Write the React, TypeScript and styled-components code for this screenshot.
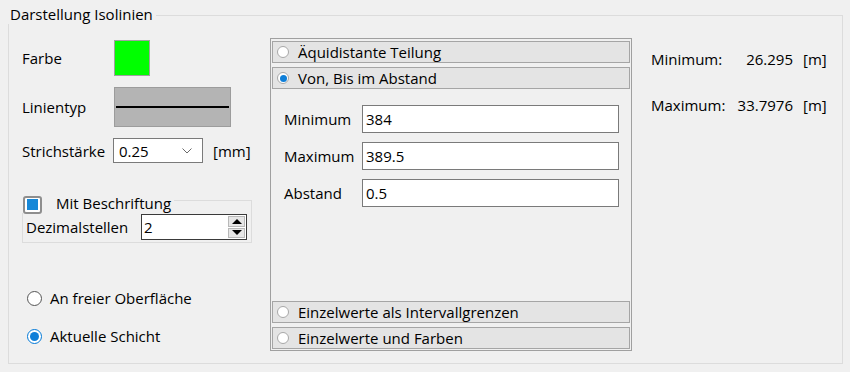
import React from "react";
import styled, { createGlobalStyle } from "styled-components";

const GlobalStyle = createGlobalStyle`
  html, body {
    margin: 0;
    padding: 0;
    background: #f0f0f0;
  }
  body {
    font-family: "Open Sans", "Noto Sans", sans-serif;
    font-size: 15px;
    color: #000;
  }
`;

const Page = styled.div`
  width: 850px;
  height: 372px;
  box-sizing: border-box;
  padding: 15px 0 0 8px;
  background: #f0f0f0;
`;

const GroupBox = styled.div`
  position: relative;
  width: 835px;
  height: 349px;
  box-sizing: border-box;
  border: 1px solid #dcdcdc;
`;

const Caption = styled.div`
  position: absolute;
  top: -12px;
  left: -1px;
  height: 20px;
  line-height: 20px;
  padding: 0 3px 0 2px;
  background: #f0f0f0;
  white-space: nowrap;
`;

const Columns = styled.div`
  display: grid;
  grid-template-columns: 230px 362px 1fr;
  column-gap: 18px;
  align-items: start;
  padding: 22px 0 0 13px;
`;

const LeftColumn = styled.div`
  display: flex;
  flex-direction: column;
  padding-top: 2px;
`;

const FieldRow = styled.div<{ $height: number; $gap?: number }>`
  display: grid;
  grid-template-columns: 92px auto 1fr;
  align-items: center;
  height: ${(p) => p.$height}px;
  margin-bottom: ${(p) => p.$gap ?? 11}px;
`;

const Label = styled.span`
  line-height: 20px;
  white-space: nowrap;
`;

const ColorSwatch = styled.div<{ $color: string }>`
  width: 36px;
  height: 36px;
  box-sizing: border-box;
  border: 1px solid #a0a0a0;
  background: ${(p) => p.$color};
`;

const LineStyleBox = styled.div`
  width: 117px;
  height: 40px;
  box-sizing: border-box;
  border: 1px solid #9c9c9c;
  background: #b4b4b4;
  display: flex;
  align-items: center;
  padding: 0 1px;
`;

const LineSample = styled.div`
  flex: 1;
  height: 2px;
  background: #000;
`;

const ComboBox = styled.div`
  display: flex;
  align-items: center;
  justify-content: space-between;
  width: 90px;
  height: 25px;
  margin-left: -1px;
  box-sizing: border-box;
  border: 1px solid #7a7a7a;
  background: #fff;
  padding: 0 10px 0 5px;
`;

const Unit = styled.span`
  margin-left: 10px;
  line-height: 20px;
`;

const SubGroup = styled.div`
  position: relative;
  margin-top: 37px;
  height: 43px;
  box-sizing: border-box;
  border: 1px solid #dcdcdc;
  padding: 13px 4px 0 3px;
`;

const SubCaption = styled.label`
  position: absolute;
  top: -8px;
  left: -1px;
  height: 20px;
  display: flex;
  align-items: center;
  gap: 14px;
  padding: 0 3px 0 1px;
  background: #f0f0f0;
  line-height: 20px;
`;

const CheckBox = styled.span<{ $checked: boolean }>`
  width: 19px;
  height: 18px;
  box-sizing: border-box;
  border: 2px solid #8e8e8e;
  border-radius: 3px;
  background: #fff;
  display: flex;
  align-items: center;
  justify-content: center;
  margin-top: 3px;

  &::after {
    content: "";
    width: 11px;
    height: 11px;
    background: ${(p) => (p.$checked ? "#1688d8" : "transparent")};
  }
`;

const SpinRow = styled.div`
  display: grid;
  grid-template-columns: 115px 1fr;
  align-items: center;
`;

const SpinBox = styled.div`
  display: flex;
  height: 26px;
  box-sizing: border-box;
  border: 1px solid #3a3a3a;
  background: #fff;
`;

const SpinValue = styled.span`
  flex: 1;
  padding-left: 2px;
  line-height: 24px;
`;

const SpinButtons = styled.div`
  display: flex;
  flex-direction: column;
  width: 17px;
  padding: 1px;
  gap: 1px;
`;

const SpinButton = styled.div<{ $up: boolean }>`
  flex: 1;
  background: #e6e6e6;
  border: 1px solid #b8b8b8;
  display: flex;
  align-items: center;
  justify-content: center;

  &::after {
    content: "";
    border-left: 5px solid transparent;
    border-right: 5px solid transparent;
    ${(p) => (p.$up ? "border-bottom" : "border-top")}: 5px solid #000;
  }
`;

const RadioList = styled.div`
  display: flex;
  flex-direction: column;
  gap: 18px;
  margin-top: 45px;
  padding-left: 5px;
`;

const RadioOption = styled.label`
  display: flex;
  align-items: center;
  gap: 8px;
  height: 20px;
  line-height: 20px;
`;

const RadioDot = styled.span<{ $checked: boolean; $size: number; $ring: string }>`
  position: relative;
  flex: none;
  width: ${(p) => p.$size}px;
  height: ${(p) => p.$size}px;
  box-sizing: border-box;
  border-radius: 50%;
  border: 1px solid ${(p) => (p.$checked && p.$size > 13 ? "#0078d7" : p.$ring)};
  background: #fff;

  &::after {
    content: "";
    position: absolute;
    inset: ${(p) => (p.$size > 13 ? 2 : 1.5)}px;
    border-radius: 50%;
    background: ${(p) => (p.$checked ? "#0f7fd8" : "transparent")};
  }
`;

const ModePanel = styled.div`
  display: flex;
  flex-direction: column;
  height: 313px;
  box-sizing: border-box;
  border: 1px solid #a0a0a0;
  padding: 2px 1px 1px 1px;
`;

const ModeGroup = styled.div<{ $pushDown?: boolean }>`
  display: flex;
  flex-direction: column;
  gap: 4px;
  margin-top: ${(p) => (p.$pushDown ? "auto" : "0")};
`;

const ModeOption = styled.label`
  display: flex;
  align-items: center;
  gap: 9px;
  height: 22px;
  box-sizing: border-box;
  border: 1px solid #a5a5a5;
  background: #e4e4e4;
  padding-left: 4px;
  line-height: 20px;
`;

const RangeFields = styled.div`
  display: grid;
  grid-template-columns: 78px 257px;
  row-gap: 9px;
  align-items: center;
  margin-top: 16px;
  padding-left: 12px;
`;

const TextField = styled.div`
  height: 28px;
  box-sizing: border-box;
  border: 1px solid #7a7a7a;
  background: #fff;
  padding-left: 3px;
  line-height: 26px;
`;

const RangeInfo = styled.div`
  display: grid;
  grid-template-columns: 77px 65px auto;
  row-gap: 26px;
  padding: 11px 0 0 1px;
  line-height: 20px;
`;

const InfoValue = styled.span`
  text-align: right;
`;

const InfoUnit = styled.span`
  padding-left: 10px;
`;

const Chevron = () => (
  <svg width="10" height="6" viewBox="0 0 10 6">
    <polyline points="0.5,0.5 5,5 9.5,0.5" fill="none" stroke="#6a6a6a" strokeWidth="1" />
  </svg>
);

const modesTop = ["Äquidistante Teilung", "Von, Bis im Abstand"];
const modesBottom = ["Einzelwerte als Intervallgrenzen", "Einzelwerte und Farben"];
const rangeValues: Array<[string, string]> = [
  ["Minimum", "384"],
  ["Maximum", "389.5"],
  ["Abstand", "0.5"],
];

export default function App() {
  return (
    <>
      <GlobalStyle />
      <Page>
        <GroupBox>
          <Caption>Darstellung Isolinien</Caption>
          <Columns>
            <LeftColumn>
              <FieldRow $height={36}>
                <Label>Farbe</Label>
                <ColorSwatch $color="#00ff00" />
              </FieldRow>
              <FieldRow $height={40}>
                <Label>Linientyp</Label>
                <LineStyleBox>
                  <LineSample />
                </LineStyleBox>
              </FieldRow>
              <FieldRow $height={25} $gap={0}>
                <Label>Strichstärke</Label>
                <ComboBox>
                  <span>0.25</span>
                  <Chevron />
                </ComboBox>
                <Unit>[mm]</Unit>
              </FieldRow>

              <SubGroup>
                <SubCaption>
                  <CheckBox $checked />
                  <span>Mit Beschriftung</span>
                </SubCaption>
                <SpinRow>
                  <Label>Dezimalstellen</Label>
                  <SpinBox>
                    <SpinValue>2</SpinValue>
                    <SpinButtons>
                      <SpinButton $up />
                      <SpinButton $up={false} />
                    </SpinButtons>
                  </SpinBox>
                </SpinRow>
              </SubGroup>

              <RadioList>
                <RadioOption>
                  <RadioDot $checked={false} $size={15} $ring="#555" />
                  An freier Oberfläche
                </RadioOption>
                <RadioOption>
                  <RadioDot $checked $size={15} $ring="#555" />
                  Aktuelle Schicht
                </RadioOption>
              </RadioList>
            </LeftColumn>

            <ModePanel>
              <ModeGroup>
                {modesTop.map((m, i) => (
                  <ModeOption key={m}>
                    <RadioDot $checked={i === 1} $size={12} $ring="#a8a8a8" />
                    {m}
                  </ModeOption>
                ))}
              </ModeGroup>
              <RangeFields>
                {rangeValues.map(([label, value]) => (
                  <React.Fragment key={label}>
                    <Label>{label}</Label>
                    <TextField>{value}</TextField>
                  </React.Fragment>
                ))}
              </RangeFields>
              <ModeGroup $pushDown>
                {modesBottom.map((m) => (
                  <ModeOption key={m}>
                    <RadioDot $checked={false} $size={12} $ring="#a8a8a8" />
                    {m}
                  </ModeOption>
                ))}
              </ModeGroup>
            </ModePanel>

            <RangeInfo>
              <span>Minimum:</span>
              <InfoValue>26.295</InfoValue>
              <InfoUnit>[m]</InfoUnit>
              <span>Maximum:</span>
              <InfoValue>33.7976</InfoValue>
              <InfoUnit>[m]</InfoUnit>
            </RangeInfo>
          </Columns>
        </GroupBox>
      </Page>
    </>
  );
}
